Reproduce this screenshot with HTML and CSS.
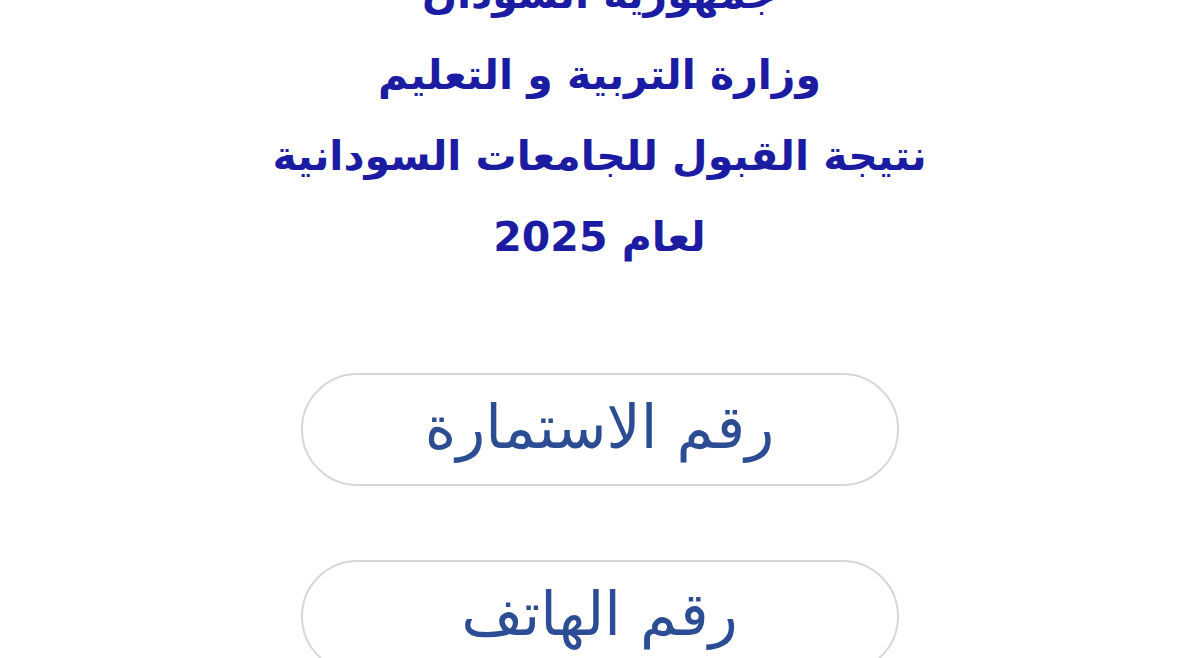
FILE: index.html
```html
<!DOCTYPE html>
<html lang="ar" dir="rtl">
<head>
<meta charset="utf-8">
<title>نتيجة القبول للجامعات السودانية</title>
<link rel="stylesheet" href="styles.css">
</head>
<body>
<main class="page">
  <header class="title">
    <p class="title-line">جمهورية السودان</p>
    <p class="title-line">وزارة التربية و التعليم</p>
    <p class="title-line">نتيجة القبول للجامعات السودانية</p>
    <p class="title-line">لعام 2025</p>
  </header>
  <nav class="options">
    <button class="option">رقم الاستمارة</button>
    <button class="option">رقم الهاتف</button>
  </nav>
</main>
</body>
</html>
```
FILE: styles.css
```css
html, body {
  margin: 0;
  padding: 0;
  background: #ffffff;
  overflow: hidden;
}
.page {
  width: 1177px;
  height: 658px;
  display: flex;
  flex-direction: column;
  align-items: center;
  font-family: "DejaVu Sans", "Noto Sans", sans-serif;
}
.title {
  margin-top: -46px;
  display: flex;
  flex-direction: column;
  align-items: center;
  padding-left: 22px;
}
.title-line {
  margin: 0;
  font-size: 41px;
  line-height: 81px;
  font-weight: bold;
  color: #1c1ca3;
  text-align: center;
}
.options {
  margin-top: 95px;
  display: flex;
  flex-direction: column;
  align-items: center;
  gap: 74px;
  padding-left: 22px;
}
.option {
  box-sizing: border-box;
  width: 598px;
  height: 113px;
  border: 2px solid #d4d7de;
  border-radius: 57px;
  background: #ffffff;
  font-family: "DejaVu Sans", "Noto Sans", sans-serif;
  font-size: 60px;
  color: #2c4d93;
  display: flex;
  align-items: center;
  justify-content: center;
  padding: 0 0 6px 0;
}
```
